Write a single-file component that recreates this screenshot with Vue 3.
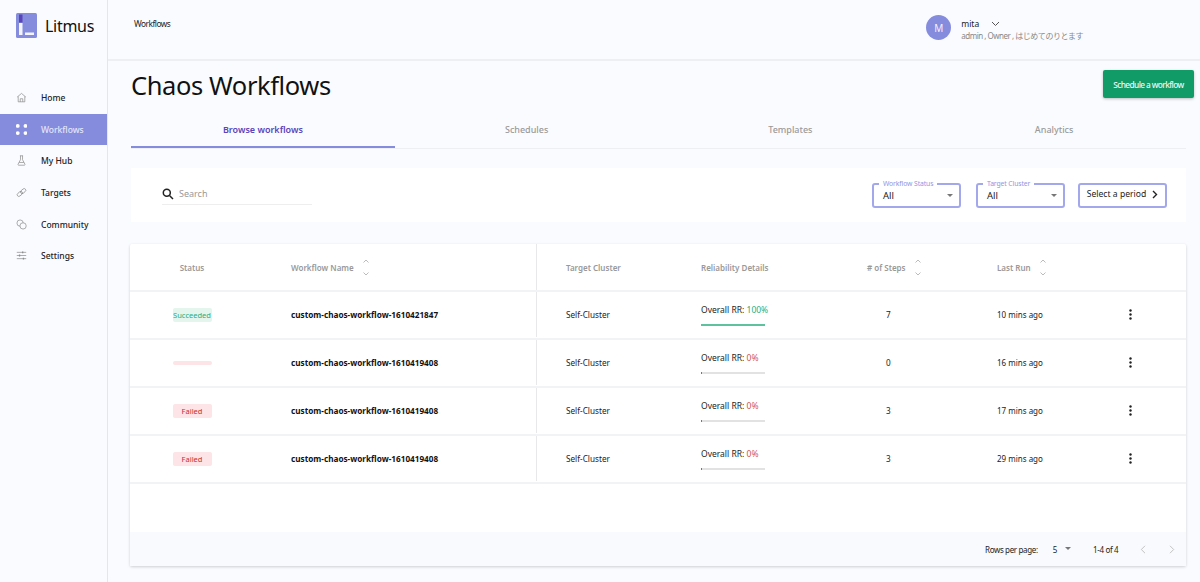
<script setup>
const nav = [
  { label: 'Home', icon: 'home' },
  { label: 'Workflows', icon: 'dots', active: true },
  { label: 'My Hub', icon: 'flask' },
  { label: 'Targets', icon: 'link' },
  { label: 'Community', icon: 'chat' },
  { label: 'Settings', icon: 'sliders' }
]
const tabs = ['Browse workflows', 'Schedules', 'Templates', 'Analytics']
const rows = [
  { status: 'Succeeded', kind: 'ok', name: 'custom-chaos-workflow-1610421847', rr: 100, steps: 7, last: '10 mins ago' },
  { status: '', kind: 'bad', name: 'custom-chaos-workflow-1610419408', rr: 0, steps: 0, last: '16 mins ago' },
  { status: 'Failed', kind: 'bad', name: 'custom-chaos-workflow-1610419408', rr: 0, steps: 3, last: '17 mins ago' },
  { status: 'Failed', kind: 'bad', name: 'custom-chaos-workflow-1610419408', rr: 0, steps: 3, last: '29 mins ago' }
]
</script>

<template>
  <div class="app">
    <aside class="side">
      <div class="logo">
        <svg width="21" height="25" viewBox="0 0 21 25">
          <rect width="21" height="25" rx="1.5" fill="#858cdd" />
          <rect x="3" y="1.5" width="3.5" height="8" fill="#5b44ba" />
          <rect x="3" y="10" width="3.5" height="12" fill="#f4f5fc" />
          <rect x="9" y="19.5" width="9" height="2.5" fill="#f4f5fc" />
        </svg>
        <span>Litmus</span>
      </div>
      <nav class="nav">
        <div v-for="n in nav" :key="n.label" class="nav-item" :class="{ active: n.active }">
          <svg class="nav-ico" width="11" height="11" viewBox="0 0 14 14" fill="none" stroke="#8b8b8b" stroke-width="0.9">
            <template v-if="n.icon === 'home'">
              <path d="M1.5 6.5 7 1.8l5.5 4.7M2.8 5.6v6.9h8.4V5.6" />
              <path d="M5.4 12.5V8.6h3.2v3.9" />
            </template>
            <template v-else-if="n.icon === 'dots'">
              <g fill="#fff" stroke="none">
                <circle cx="2.300" cy="2.500" r="2.400" />
                <circle cx="12" cy="2.500" r="2.400" />
                <circle cx="2.300" cy="11.500" r="2.400" />
                <circle cx="12" cy="11.500" r="2.400" />
              </g>
            </template>
            <template v-else-if="n.icon === 'flask'">
              <path d="M5 1h4M5.700 1v5L2.700 11.600c-.4.8 0 1.400.8 1.400h7c.8 0 1.200-.6.8-1.400L8.300 6V1" />
              <path d="M4 9.500h6" />
            </template>
            <template v-else-if="n.icon === 'link'">
              <g transform="rotate(-40 7 7)">
                <rect x="0.5" y="4.900" width="7.500" height="4.200" rx="2.100" />
                <rect x="6" y="4.900" width="7.500" height="4.200" rx="2.100" />
              </g>
            </template>
            <template v-else-if="n.icon === 'chat'">
              <circle cx="5.200" cy="5.200" r="4" />
              <circle cx="9" cy="8.800" r="4" fill="#fafbff" />
            </template>
            <template v-else>
              <path d="M1 3h12M1 7h12M1 11h12" />
              <path d="M8.500 1.800v2.400M4.500 5.800v2.400M9.500 9.800v2.400" stroke-width="1.600" />
            </template>
          </svg>
          <span>{{ n.label }}</span>
        </div>
      </nav>
    </aside>

    <div class="main">
      <header class="top">
        <div class="crumb">Workflows</div>
        <div class="user">
          <div class="avatar">M</div>
          <div class="who">
            <div class="who-name">
              <span>mita</span>
              <svg width="9" height="6" viewBox="0 0 9 6" fill="none" stroke="#555" stroke-width="1"><path d="M1 1l3.500 3.500L8 1" /></svg>
            </div>
            <div class="who-sub">admin , Owner , はじめてのりとます</div>
          </div>
        </div>
      </header>

      <main class="content">
        <div class="title-row">
          <h1>Chaos Workflows</h1>
          <button class="primary">Schedule a workflow</button>
        </div>

        <div class="tabs">
          <div v-for="(t, i) in tabs" :key="t" class="tab" :class="{ on: i === 0 }">{{ t }}</div>
        </div>

        <section class="filters">
          <div class="search">
            <svg width="12" height="12" viewBox="0 0 12 12" fill="none" stroke="#222" stroke-width="1.500"><circle cx="4.800" cy="4.800" r="3.500" /><path d="M7.500 7.500 11 11" /></svg>
            <span>Search</span>
          </div>
          <div class="filter-set">
            <div class="select">
              <span class="legend">Workflow Status</span>
              <span>All</span>
              <i class="caret"></i>
            </div>
            <div class="select">
              <span class="legend">Target Cluster</span>
              <span>All</span>
              <i class="caret"></i>
            </div>
            <div class="period">
              <span>Select a period</span>
              <svg width="6" height="9" viewBox="0 0 6 9" fill="none" stroke="#222" stroke-width="1.400"><path d="M1 1l3.500 3.500L1 8" /></svg>
            </div>
          </div>
        </section>

        <section class="table">
          <div class="row head">
            <div class="c status-c">Status</div>
            <div class="c">Workflow Name
              <span class="sort"><svg width="6" height="4" viewBox="0 0 6 4" fill="none" stroke="#aaa" stroke-width="0.800"><path d="M.5 3.500 3 1l2.500 2.500" /></svg><svg width="6" height="4" viewBox="0 0 6 4" fill="none" stroke="#aaa" stroke-width="0.800"><path d="M.5.500 3 3 5.500.500" /></svg></span>
            </div>
            <div class="c target-c">Target Cluster</div>
            <div class="c">Reliability Details</div>
            <div class="c">
              # of Steps
              <span class="sort"><svg width="6" height="4" viewBox="0 0 6 4" fill="none" stroke="#aaa" stroke-width="0.800"><path d="M.5 3.500 3 1l2.500 2.500" /></svg><svg width="6" height="4" viewBox="0 0 6 4" fill="none" stroke="#aaa" stroke-width="0.800"><path d="M.5.500 3 3 5.500.500" /></svg></span>
            </div>
            <div class="c">
              Last Run
              <span class="sort"><svg width="6" height="4" viewBox="0 0 6 4" fill="none" stroke="#aaa" stroke-width="0.800"><path d="M.5 3.500 3 1l2.500 2.500" /></svg><svg width="6" height="4" viewBox="0 0 6 4" fill="none" stroke="#aaa" stroke-width="0.800"><path d="M.5.500 3 3 5.500.500" /></svg></span>
            </div>
          </div>

          <div v-for="(r, i) in rows" :key="i" class="row body">
            <div class="c status-c"><span class="chip" :class="r.kind">{{ r.status }}</span></div>
            <div class="c name">{{ r.name }}</div>
            <div class="c target-c cluster">Self-Cluster</div>
            <div class="c rr">
              <div class="rr-text">Overall RR: <span :class="r.kind">{{ r.rr }}%</span></div>
              <div class="bar"><div class="fill" :class="r.kind" :style="{ width: Math.max(r.rr, 2) + '%' }"></div></div>
            </div>
            <div class="c steps">{{ r.steps }}</div>
            <div class="c last">
              <span class="ago">{{ r.last }}</span>
              <svg width="3" height="11" viewBox="0 0 3 11" fill="#222"><circle cx="1.500" cy="1.500" r="1.200" /><circle cx="1.500" cy="5.500" r="1.200" /><circle cx="1.500" cy="9.500" r="1.200" /></svg>
            </div>
          </div>

          <div class="spacer"></div>

          <div class="pager">
            <span>Rows per page:</span>
            <span class="size">5</span>
            <i class="caret small"></i>
            <span class="range">1-4 of 4</span>
            <svg class="p1" width="6" height="9" viewBox="0 0 6 9" fill="none" stroke="#bbb" stroke-width="0.900"><path d="M5 .8 1.300 4.500 5 8.200" /></svg>
            <svg class="p2" width="6" height="9" viewBox="0 0 6 9" fill="none" stroke="#bbb" stroke-width="0.900"><path d="M1 .8 4.700 4.500 1 8.200" /></svg>
          </div>
        </section>
      </main>
    </div>
  </div>
</template>

<style>
html, body { margin: 0; background: #fafbff; }
</style>

<style scoped>
.app {
  display: flex;
  width: 1200px;
  height: 582px;
  overflow: hidden;
  background: #fafbff;
  color: #222;
  font-family: "Noto Sans", "Noto Sans CJK JP", sans-serif;
}
.side {
  width: 107px;
  flex: none;
  border-right: 1px solid #e6e6ea;
}
.logo {
  display: flex;
  align-items: center;
  gap: 8px;
  padding: 13px 0 0 16px;
  height: 25px;
  font-size: 16px;
  letter-spacing: -0.3px;
  color: #111;
}
.nav { margin-top: 44px; }
.nav-item {
  display: flex;
  align-items: center;
  height: 31.600px;
  padding: 0 0 0 15.500px;
  box-sizing: border-box;
  font-size: 8.500px;
  font-weight: 500;
  color: #222;
}
.nav-item span { margin-left: 14.500px; }
.nav-item.active {
  background: #858cdd;
  color: #e4e6fb;
}
.nav-ico { flex: none; }
.main { flex: 1; min-width: 0; display: flex; flex-direction: column; }
.top {
  height: 59px;
  flex: none;
  display: flex;
  justify-content: space-between;
  border-bottom: 2px solid #eeeff2;
}
.crumb { font-size: 8.300px; letter-spacing: -0.5px; padding: 18px 0 0 26px; color: #222; }
.user {
  display: flex;
  align-items: flex-start;
  gap: 10px;
  padding: 15px 117px 0 0;
}
.avatar {
  width: 25px;
  height: 25px;
  border-radius: 50%;
  background: #858cdd;
  color: #f2f3fc;
  font-size: 10px;
  display: flex;
  align-items: center;
  justify-content: center;
}
.who { padding-top: 3px; }
.who-name { display: flex; align-items: center; gap: 12px; font-size: 8.500px; line-height: 12px; color: #222; }
.who-sub { font-size: 8px; letter-spacing: -0.48px; line-height: 11px; color: #888; margin-top: 0; }
.content { flex: 1; min-height: 0; padding: 0 14px 0 22px; }
.title-row {
  display: flex;
  justify-content: space-between;
  align-items: flex-start;
  height: 57px;
}
h1 {
  margin: 6px 0 0 1px;
  font-size: 25.500px;
  letter-spacing: -0.4px;
  font-weight: 400;
  line-height: 36px;
  color: #111;
}
.primary {
  margin: 9px -8px 0 0;
  width: 91px;
  height: 28px;
  border: 0;
  padding: 0;
  border-radius: 2px;
  background: #109b67;
  color: #eef8f3;
  font: 500 8.300px "Noto Sans", sans-serif;
  letter-spacing: -0.6px;
  box-shadow: 0 1px 3px rgba(0, 0, 0, .25);
}
.tabs {
  display: flex;
  height: 30px;
  border-bottom: 1px solid #eeeff2;
  margin-left: 1px;
}
.tab {
  width: 264px;
  text-align: center;
  font-size: 9px;
  line-height: 24px;
  color: #9a9a9a;
  font-weight: 500;
}
.tab.on {
  color: #5b44ba;
  font-weight: 600;
  border-bottom: 2px solid #858cdd;
  height: 30px;
  box-sizing: border-box;
}
.filters {
  margin-top: 19px;
  height: 54px;
  margin-left: 1px;
  background: #fff;
  display: flex;
  align-items: center;
  justify-content: space-between;
  padding: 0 19px 0 31px;
}
.search {
  width: 150px;
  height: 21px;
  display: flex;
  align-items: center;
  gap: 5px;
  font-size: 9px;
  color: #999;
  border-bottom: 1px solid #eee;
  margin-top: -2px;
}
.filter-set { display: flex; gap: 15px; align-items: center; }
.select, .period {
  position: relative;
  box-sizing: border-box;
  width: 89px;
  height: 25px;
  border: 2px solid #a3a8ec;
  border-radius: 3px;
  display: flex;
  align-items: center;
  font-size: 9.500px;
  color: #222;
}
.select { padding: 1px 0 0 9px; }
.period {
  justify-content: center;
  gap: 6px;
  font-size: 8.600px;
  margin-left: -2px;
  padding-bottom: 2px;
}
.legend {
  position: absolute;
  left: 5px;
  top: -6px;
  padding: 0 4px;
  background: #fff;
  font-size: 6.800px;
  letter-spacing: -0.1px;
  line-height: 9px;
  color: #8f95e4;
  white-space: nowrap;
}
.caret {
  position: absolute;
  right: 6px;
  top: 9px;
  width: 0;
  height: 0;
  border-left: 3px solid transparent;
  border-right: 3px solid transparent;
  border-top: 3px solid #777;
}
.caret.small { position: static; margin: -1px 0 0 8px; }
.table {
  margin-top: 22px;
  width: 1056px;
  height: 322px;
  background: #fff;
  border-radius: 2px;
  display: flex;
  flex-direction: column;
  box-shadow: 0 1px 3px rgba(0, 0, 0, .18);
}
.row {
  display: grid;
  grid-template-columns: 161px 245px 165px 166px 130px 189px;
  border-bottom: 2px solid #f2f3f5;
  box-sizing: border-box;
  align-items: center;
}
.row.head {
  height: 48px;
  font-size: 8px;
  font-weight: 600;
  color: #999;
}
.row.body { height: 48px; font-size: 8.200px; padding-bottom: 1px; }
.c { display: flex; align-items: center; height: 100%; min-width: 0; white-space: nowrap; }
.status-c { width: 124px; justify-content: center; }
.target-c { border-left: 1px solid #e8e8ea; padding-left: 29px; }
.cluster { padding-left: 29px; }
.sort { display: flex; flex-direction: column; gap: 9px; margin-left: 9px; margin-top: 1px; }
.sort svg { display: block; }
.name { font-weight: 700; color: #111; }
.chip {
  width: 39px;
  min-height: 3px;
  border-radius: 2px;
  text-align: center;
  font-size: 7.500px;
  line-height: 14px;
}
.chip:empty { line-height: 4px; height: 4px; }
.chip.ok { background: #e4f5ee; color: #27ae7f; }
.chip.bad { background: #fde4e6; color: #ca2c2c; }
.rr { flex-direction: column; align-items: flex-start; justify-content: flex-start; padding-top: 12px; box-sizing: border-box; }
.rr-text { font-size: 8.500px; line-height: 12px; color: #222; }
.rr-text .ok { color: #27ae7f; }
.rr-text .bad { color: #d6504c; }
.bar { width: 64px; height: 2px; margin-top: 8px; background: #e2e2e2; }
.fill { height: 100%; }
.fill.ok { background: #5ec39c; }
.fill.bad { background: #d6504c; }
.steps { padding-left: 19px; }
.last { justify-content: flex-start; }
.ago { width: 131.500px; font-size: 8px; }
.spacer { flex: 1; }
.pager {
  height: 34px;
  background: #f9fafd;
  display: flex;
  align-items: center;
  padding-left: 855px;
  font-size: 8px;
  letter-spacing: -0.35px;
  color: #222;
}
.size { margin-left: 15px; }
.range { margin-left: 22px; }
.p1 { margin-left: 22px; }
.p2 { margin-left: 23px; }
</style>
